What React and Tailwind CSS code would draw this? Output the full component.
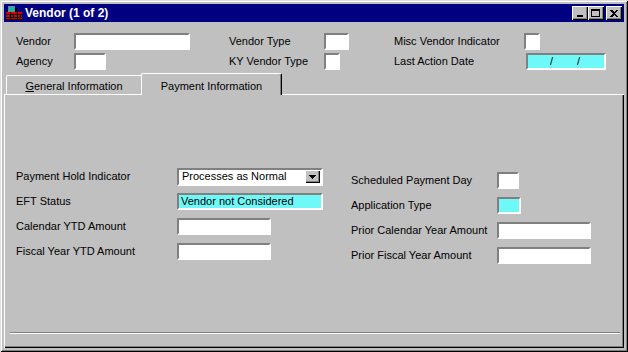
import React from 'react';

const font = "font-['Liberation_Sans',Arial,sans-serif]";

// sunken win95 text box
const Field = ({ className = '', cyan = false, children }) => (
  <div
    className={`h-[17px] border-2 border-t-[#808080] border-l-[#808080] border-r-white border-b-white ${
      cyan ? 'bg-[#6ff8f8]' : 'bg-white'
    } ${className}`}
  >
    {children}
  </div>
);

const CaptionButton = ({ children, className = '' }) => (
  <div
    className={`w-[16px] h-[14px] bg-[#c0c0c0] flex items-center justify-center shadow-[inset_1px_1px_#ffffff,inset_-1px_-1px_#000000,inset_-2px_-2px_#808080] ${className}`}
  >
    {children}
  </div>
);

const AppIcon = () => (
  <svg width="16" height="14" viewBox="0 0 16 14" shapeRendering="crispEdges">
    {/* monitor */}
    <rect x="2" y="0" width="7" height="6" fill="#808080" />
    <rect x="3" y="1" width="5" height="4" fill="#00c0c0" />
    <rect x="9" y="2" width="2" height="4" fill="#000000" />
    {/* brick desk */}
    <rect x="0" y="6" width="16" height="8" fill="#e00000" />
    <rect x="0" y="8" width="16" height="1" fill="#000000" />
    <rect x="0" y="11" width="16" height="1" fill="#000000" />
    <rect x="0" y="13" width="16" height="1" fill="#000000" />
    <rect x="4" y="6" width="1" height="8" fill="#000000" />
    <rect x="11" y="6" width="1" height="8" fill="#000000" />
    <rect x="7" y="9" width="1" height="2" fill="#000000" />
    <rect x="14" y="9" width="1" height="2" fill="#000000" />
  </svg>
);

const Row = ({ label, children }) => (
  <>
    <div className="flex items-center">{label}</div>
    <div className="flex items-center">{children}</div>
  </>
);

export default function App() {
  return (
    <div
      className={`w-[628px] h-[352px] bg-[#c0c0c0] p-[4px] flex flex-col text-[11px] text-black ${font} shadow-[inset_1px_1px_#dfdfdf,inset_-1px_-1px_#000000,inset_2px_2px_#ffffff,inset_-2px_-2px_#808080]`}
    >
      {/* title bar */}
      <div className="h-[18px] bg-[#000080] flex items-center pl-[2px] pr-[2px]">
        <AppIcon />
        <span className="ml-[3px] text-white font-bold text-[12px] leading-none">Vendor (1 of 2)</span>
        <div className="ml-auto flex items-center">
          <CaptionButton>
            <div className="w-[6px] h-[2px] bg-black mt-[6px] mr-[1px]" />
          </CaptionButton>
          <CaptionButton>
            <div className="w-[9px] h-[8px] border border-black border-t-2 mr-[1px]" />
          </CaptionButton>
          <CaptionButton className="ml-[2px]">
            <svg width="8" height="7" viewBox="0 0 8 7" shapeRendering="crispEdges" className="mr-[1px]">
              <path d="M0 0h2l2 2 2-2h2L5 3.5 8 7H6L4 5 2 7H0l3-3.5z" fill="#000" />
            </svg>
          </CaptionButton>
        </div>
      </div>

      {/* header fields */}
      <div className="mt-[11px] pl-[12px] grid grid-cols-[58px_155px_95px_70px_130px_1fr] grid-rows-[17px_17px] gap-y-[3px]">
        <Row label="Vendor">
          <Field className="w-[116px]" />
        </Row>
        <Row label="Vendor Type">
          <Field className="w-[25px]" />
        </Row>
        <Row label="Misc Vendor Indicator">
          <Field className="w-[16px]" />
        </Row>
        <Row label="Agency">
          <Field className="w-[32px]" />
        </Row>
        <Row label="KY Vendor Type">
          <Field className="w-[16px]" />
        </Row>
        <Row label="Last Action Date">
          <Field cyan className="w-[80px] ml-[2px] flex items-center">
            <span className="ml-[22px] leading-none">/</span>
            <span className="ml-[24px] leading-none">/</span>
          </Field>
        </Row>
      </div>

      {/* tabs */}
      <div className="mt-[3px] h-[21px] flex items-end">
        <div className="ml-[2px] w-[135px] h-[19px] border-t border-l border-white rounded-tl-[2px] flex items-center justify-center pt-[3px]">
          <span>
            <span className="underline">G</span>eneral Information
          </span>
        </div>
        <div className="relative z-10 -mb-px w-[141px] h-[22px] bg-[#c0c0c0] border-t border-l border-white rounded-tl-[2px] rounded-tr-[2px] shadow-[inset_-1px_0_#808080] border-r border-r-black flex items-center justify-center pt-[3px]">
          Payment Information
        </div>
      </div>

      {/* tab panel */}
      <div className="flex-1 flex flex-col border-t border-l border-white shadow-[inset_-1px_-1px_#000000,inset_-2px_-2px_#808080]">
        <div className="flex pl-[11px] pt-[69px]">
          <div className="w-[335px] grid grid-cols-[161px_1fr] auto-rows-[25px]">
            <Row label="Payment Hold Indicator">
              <div className="w-[146px] h-[18px] border-2 border-t-[#808080] border-l-[#808080] border-r-white border-b-white bg-white flex items-center pl-[3px] pr-[1px]">
                <span>Processes as Normal</span>
                <div className="ml-auto w-[15px] h-[13px] bg-[#c0c0c0] flex items-center justify-center shadow-[inset_1px_1px_#ffffff,inset_-1px_-1px_#000000,inset_-2px_-2px_#808080]">
                  <svg width="7" height="4" viewBox="0 0 7 4" shapeRendering="crispEdges">
                    <path d="M0 0h7L3.5 4z" fill="#000" />
                  </svg>
                </div>
              </div>
            </Row>
            <Row label="EFT Status">
              <Field cyan className="w-[146px] flex items-center pl-[2px]">
                <span className="leading-none">Vendor not Considered</span>
              </Field>
            </Row>
            <Row label="Calendar YTD Amount">
              <Field className="w-[94px]" />
            </Row>
            <Row label="Fiscal Year YTD Amount">
              <Field className="w-[94px]" />
            </Row>
          </div>
          <div className="mt-[4px] grid grid-cols-[146px_1fr] auto-rows-[25px]">
            <Row label="Scheduled Payment Day">
              <Field className="w-[22px]" />
            </Row>
            <Row label="Application Type">
              <Field cyan className="w-[24px]" />
            </Row>
            <Row label="Prior Calendar Year Amount">
              <Field className="w-[94px]" />
            </Row>
            <Row label="Prior Fiscal Year Amount">
              <Field className="w-[94px]" />
            </Row>
          </div>
        </div>
        <div className="mt-auto mb-[14px] ml-[5px] mr-[4px] h-[2px] border-t border-t-[#808080] border-b border-b-white" />
      </div>
    </div>
  );
}
